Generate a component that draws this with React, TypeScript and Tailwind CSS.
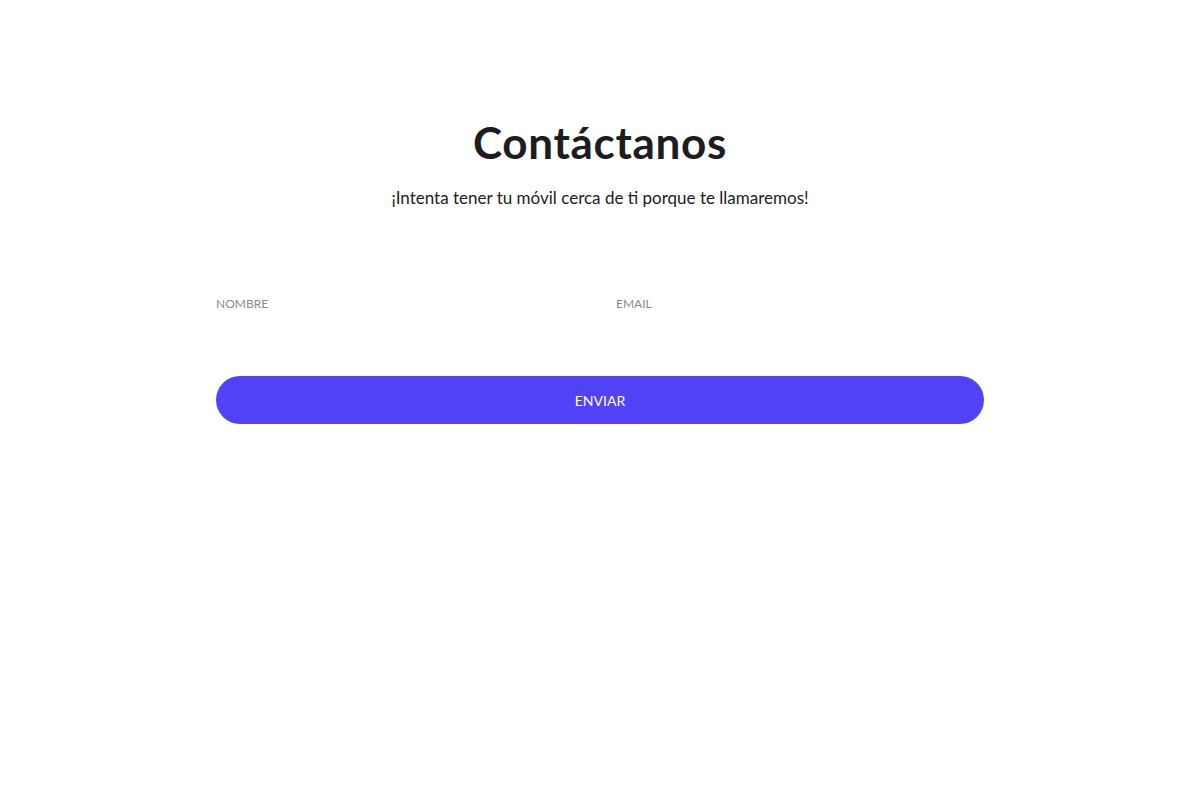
import React from 'react';

const App: React.FC = () => {
  return (
    <div className="min-h-[810px] bg-white font-['Lato',sans-serif]">
      <section className="mx-auto w-[768px] pt-[112px]">
        <div className="text-center">
          <h1 className="text-[44px] leading-[60px] font-bold text-[#1c1c21] tracking-[0.7px]">
            Contáctanos
          </h1>
          <p className="mt-[14px] text-[17px] leading-[24px] text-[#1c1c21]">
            ¡Intenta tener tu móvil cerca de ti porque te llamaremos!
          </p>
        </div>

        <form className="mt-[86px]">
          <div className="grid grid-cols-2 gap-8">
            <label className="block">
              <span className="block text-[12px] leading-[16px] text-[#8a8a8a]">NOMBRE</span>
              <input type="text" className="mt-2 block h-[40px] w-full bg-transparent outline-none" />
            </label>
            <label className="block">
              <span className="block text-[12px] leading-[16px] text-[#8a8a8a]">EMAIL</span>
              <input type="email" className="mt-2 block h-[40px] w-full bg-transparent outline-none" />
            </label>
          </div>

          <button
            type="button"
            className="mt-[16px] h-[48px] w-full rounded-full bg-[#5143f5] text-[14px] text-white"
          >
            ENVIAR
          </button>
        </form>
      </section>
    </div>
  );
};

export default App;
